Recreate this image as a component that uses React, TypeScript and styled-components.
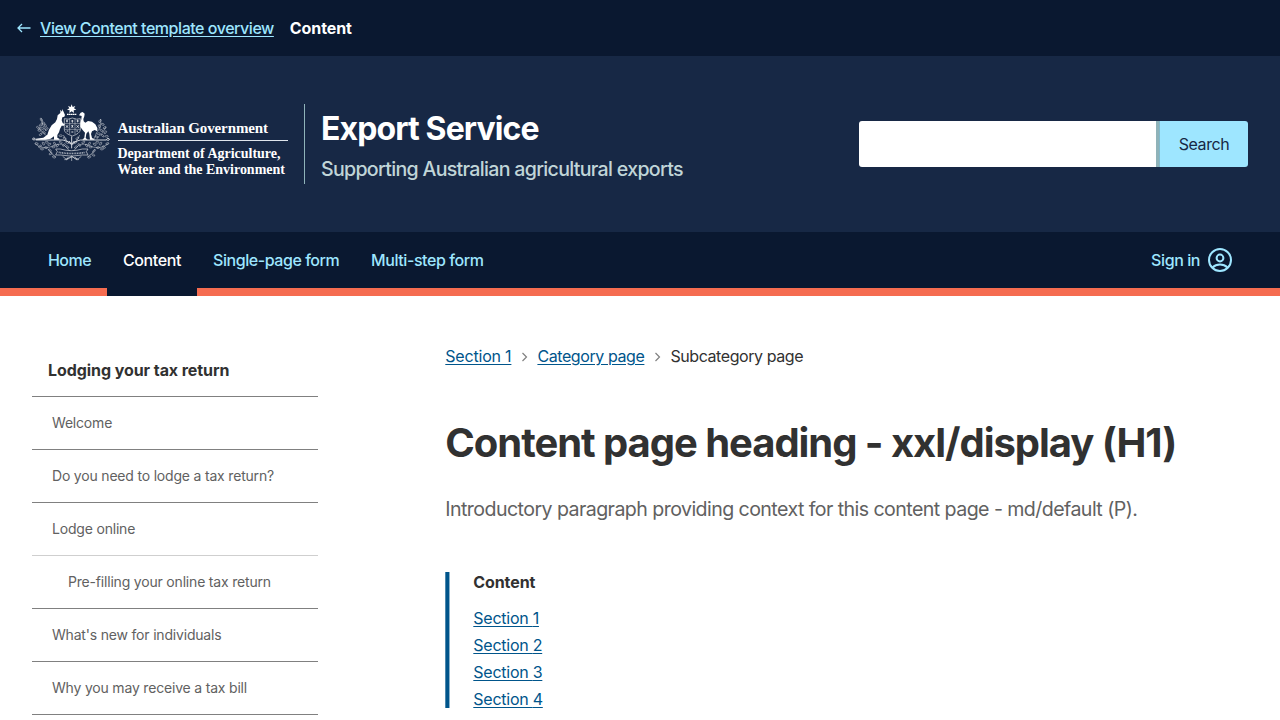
import React from "react";
import styled, { createGlobalStyle } from "styled-components";

const color = {
  shade: "#0a1830",
  body: "#172845",
  action: "#9ee6ff",
  accent: "#f56c50",
  borderDark: "#8fb3b9",
  mutedDark: "#c0d5d8",
  link: "#00558b",
  text: "#313131",
  muted: "#616161",
  border: "#808080",
};

const GlobalStyle = createGlobalStyle`
  *, *::before, *::after { box-sizing: border-box; }
  html, body { margin: 0; padding: 0; height: 720px; overflow: hidden; background: #fff; }
  body {
    font-family: Inter, "Liberation Sans", sans-serif;
    font-size: 16px;
    line-height: 24px;
    color: ${color.text};
  }
  h1, h2, p, ul, ol { margin: 0; padding: 0; }
  ul, ol { list-style: none; }
`;

const Label = styled.span<{ $track?: number }>`
  letter-spacing: ${(p) => p.$track ?? -0.35}px;
  white-space: nowrap;
`;

const TopBar = styled.div`
  display: flex;
  align-items: center;
  height: 56px;
  padding: 0 16px;
  background: ${color.shade};
  color: #fff;
`;

const BackLink = styled.a`
  display: flex;
  align-items: center;
  gap: 8px;
  margin-right: 16px;
  color: ${color.action};
  font-weight: 450;
  span { text-decoration: underline; text-underline-offset: 2px; }
`;

const Strong = styled.strong`
  font-weight: 700;
  letter-spacing: -0.1px;
`;

const Header = styled.header`
  display: flex;
  align-items: center;
  justify-content: space-between;
  height: 176px;
  padding: 0 32px;
  background: ${color.body};
`;

const Brand = styled.div`
  display: flex;
  height: 80px;
`;

const Crest = styled.div`
  display: flex;
  width: 273px;
  border-right: 1px solid ${color.borderDark};
  color: #fff;
`;

const Wordmark = styled.div`
  width: 170px;
  margin-left: 7.5px;
  padding-top: 16px;
  font-family: "Liberation Serif", serif;
  font-weight: 700;
  white-space: nowrap;
`;

const Government = styled.div`
  height: 21px;
  border-bottom: 1px solid #dfe5ec;
  font-size: 15px;
  line-height: 17px;
  letter-spacing: -0.12px;
`;

const Department = styled.div`
  margin-top: 5px;
  font-size: 14px;
  line-height: 16px;
  letter-spacing: -0.02px;
`;

const Titles = styled.div`
  padding: 5px 0 0 16px;
`;

const SiteTitle = styled.div`
  font-size: 32px;
  line-height: 40px;
  font-weight: 700;
  letter-spacing: -0.88px;
  color: #fff;
`;

const SiteSubtitle = styled.div`
  margin-top: 5px;
  font-size: 19.6px;
  line-height: 30px;
  letter-spacing: -0.7px;
  font-weight: 450;
  color: ${color.mutedDark};
`;

const SearchForm = styled.form`
  display: flex;
  width: 389px;
  height: 46px;
`;

const SearchInput = styled.input`
  flex: 1;
  min-width: 0;
  border: 0;
  border-right: 3px solid ${color.borderDark};
  border-radius: 3px 0 0 3px;
  background: #fff;
  outline: none;
`;

const SearchButton = styled.button`
  width: 89px;
  padding: 0;
  border: 0;
  border-left: 1px solid #82b9cb;
  border-radius: 0 3px 3px 0;
  background: ${color.action};
  color: ${color.body};
  font: inherit;
  letter-spacing: -0.4px;
`;

const Nav = styled.nav`
  display: flex;
  justify-content: space-between;
  height: 64px;
  padding: 0 32px;
  background: linear-gradient(${color.shade} 56px, ${color.accent} 56px);
`;

const NavList = styled.ul`
  display: flex;
`;

const NavItem = styled.li<{ $active?: boolean; $width?: number }>`
  display: flex;
  align-items: center;
  gap: 8px;
  height: 64px;
  width: ${(p) => (p.$width ? `${p.$width}px` : "auto")};
  padding: 0 16px 8px;
  background: ${(p) => (p.$active ? color.shade : "transparent")};
  color: ${(p) => (p.$active ? "#fff" : color.action)};
  font-weight: 450;
`;

const Page = styled.div`
  display: flex;
  padding: 48px 32px 0;
`;

const Sidebar = styled.aside`
  width: 286px;
  margin-right: 127.3px;
`;

const SideHeading = styled.h2`
  height: 52px;
  padding: 14px 16px;
  font-size: 16px;
  line-height: 24px;
  font-weight: 700;
  letter-spacing: -0.07px;
`;

const SideItem = styled.li<{ $level?: number; $faint?: boolean }>`
  height: 53px;
  padding: 14px 0 0 ${(p) => (p.$level ? 36 : 20)}px;
  border-top: 1px solid ${(p) => (p.$faint ? "#cfcfcf" : color.border)};
  font-size: 14px;
  color: ${color.muted};
`;

const SideList = styled.ul`
  border-bottom: 1px solid ${color.border};
`;

const Main = styled.main`
  flex: 1;
`;

const Breadcrumbs = styled.ol`
  display: flex;
  align-items: center;
  height: 24px;
  svg { display: block; margin: 0 8px; }
`;

const Link = styled.a<{ $track?: number }>`
  color: ${color.link};
  letter-spacing: ${(p) => p.$track ?? -0.25}px;
  text-decoration: underline;
  text-underline-offset: 2px;
`;

const PageHeading = styled.h1`
  margin-top: 50px;
  font-size: 40px;
  line-height: 50px;
  font-weight: 700;
  letter-spacing: -1.05px;
  white-space: nowrap;
`;

const Intro = styled.p`
  margin-top: 26px;
  font-size: 19.6px;
  line-height: 30px;
  letter-spacing: -0.57px;
  color: ${color.muted};
`;

const Contents = styled.section`
  height: 136px;
  margin-top: 48px;
  padding-left: 28px;
  background: linear-gradient(90deg, #4c88ae 1px, ${color.link} 1px 4px, #8cb3cb 4px 5px, transparent 5px);
`;

const ContentsHeading = styled.h2`
  font-size: 16px;
  line-height: 20px;
  font-weight: 700;
  letter-spacing: -0.1px;
`;

const ContentsList = styled.ul`
  margin-top: 13px;
  li { height: 27px; line-height: 27px; }
`;

const leaves: [number, number, number][] = [
  [64, 74, 60], [70, 84, 20], [62, 90, -30], [76, 92, 70], [66, 100, 30], [80, 102, -40], [58, 106, 10],
  [72, 112, 50], [62, 118, -40], [54, 98, 40],
  [240, 78, -60], [248, 88, 20], [238, 94, 70], [254, 98, -30], [244, 106, 30], [256, 112, -50], [236, 116, 0],
  [248, 122, 40], [260, 124, 0], [230, 126, 30],
  [50, 146, 20], [60, 154, -40], [70, 146, 60], [78, 158, 10], [88, 148, -30], [90, 166, 50], [100, 156, 0],
  [104, 146, 60], [80, 142, 0], [92, 176, -30], [102, 186, 20], [112, 152, -50], [66, 162, 10],
  [262, 146, -20], [252, 156, 40], [242, 146, -60], [234, 158, -10], [224, 148, 30], [222, 168, -50], [212, 156, 0],
  [208, 146, -60], [232, 142, 0], [220, 180, 30], [208, 186, -20], [200, 152, 50], [246, 162, -10],
  [122, 142, 40], [132, 150, -40], [142, 142, 20], [166, 142, -20], [178, 150, 40], [190, 142, -40],
  [122, 122, 0], [134, 130, 40], [172, 130, -40], [142, 156, 30], [168, 156, -30],
];

function CoatOfArms() {
  return (
    <svg width="78" height="60" viewBox="36 27 234 180" fill="none" stroke="currentColor" strokeWidth="2">
      <path
        d="M155 28l3 8 8-3-4 7 7 4-8 2 1 8-7-5-7 5 1-8-8-2 7-4-4-7 8 3z"
        fill="currentColor"
        stroke="none"
      />
      <path d="M141 58h28" strokeWidth="4" strokeDasharray="5 1" />
      <path
        d="M121 44L126 50 127 42 131 51 135 60 133 65 127 67 125 76 128 84 134 88 132 92 125 92 120 102 117 112 112 120 112 128 118 131V134H102V124L92 131 76 134H46L48 131 70 128 82 119 87 104 95 91 106 82 111 72 113 61 121 54z"
        fill="currentColor"
        stroke="none"
      />
      <path
        d="M177 61L182 53 188 51 194 56 193 64 190 72 191 79 196 83 204 78 216 80 226 88 232 99 232 109 224 105 216 109 213 117 216 129 223 132V134H210L208 116 205 109 199 116 197 129 203 134H187L193 128 195 113 186 103 181 95 181 84 184 73 185 63z"
        fill="currentColor"
        stroke="none"
      />
      <g opacity=".85">
        <path d="M133 71q11 4 24-2 13 6 24 2v34q-2 11-24 18-22-7-24-18z" />
        <path d="M133 86h48M149 71v15M165 71v15M134 103h46M149 86v32M165 86v32" strokeWidth="1.5" />
        <path
          d="M138 78h6M141 74v8M154 78h6M157 75v8M170 78h6M173 74v8M138 91l6 7M144 91l-6 7M155 90l4 8M159 90l-4 8M170 91l6 7M176 91l-6 7M140 108h5M154 111h6M169 108h5"
          strokeWidth="3"
        />
      </g>
      <g opacity=".8">
        <path d="M37 132q5-7 9 0-3 7-9 0M47 135h82q14 2 26 13 12-11 26-13h78M259 134q4-8 9-2 0 7-9 2" strokeWidth="3" />
        <path
          d="M64 70q2 24 14 38M56 96q10 20 34 32M242 72q2 26-12 40l-8 20M258 96q-8 20-26 32M44 146q26 22 62 4 22-8 34 8 8 10 15 16 6-6 14-16 12-16 34-8 36 18 62-4M84 162q10 16 24 24M226 162q-10 16-24 24M130 120q8 20 25 30 16-8 24-30"
          strokeWidth="1.5"
        />
        <path d="M155 124v36M147 138l8 10 8-10" strokeWidth="3" />
      </g>
      <g opacity=".65" strokeWidth="1.9">
        {leaves.map(([x, y, a]) => (
          <ellipse key={`${x}-${y}`} cx={x} cy={y} rx="5" ry="2.6" transform={`rotate(${a} ${x} ${y})`} />
        ))}
      </g>
      <g opacity=".85">
        <path d="M107 162h14q34 10 66 0h17l-5 8 5 10h-17q-32 7-66 0h-14l5-10z" fill={color.body} />
        <path d="M116 172q40 7 80 0" strokeWidth="5" strokeDasharray="3 2" opacity=".75" />
        <path d="M155 182l-10 10-12 2M155 182l10 10 12 2M155 182v16M145 186l-6 10M165 186l6 10M128 184l10 8 18-6 18 6 10-8" strokeWidth="1.8" />
      </g>
    </svg>
  );
}

function Arrow() {
  return (
    <svg width="16" height="16" viewBox="0 0 16 16" fill="none" stroke="currentColor" strokeWidth="1.3">
      <path d="M14.500 8H2M6 4L2 8l4 4" />
    </svg>
  );
}

function Chevron() {
  return (
    <svg width="10" height="12" viewBox="0 0 10 12" fill="none" stroke="#808080" strokeWidth="1.2">
      <path d="M3.500 3l4 4-4 4" />
    </svg>
  );
}

function Avatar() {
  return (
    <svg width="24" height="24" viewBox="0 0 24 24" fill="none" stroke="currentColor" strokeWidth="2">
      <circle cx="12" cy="12" r="11" />
      <circle cx="12" cy="10" r="3.4" />
      <path d="M4.500 19.500Q7.500 16.500 12 16.500T19.500 19.500" />
    </svg>
  );
}

const sideItems = [
  { label: "Welcome" },
  { label: "Do you need to lodge a tax return?" },
  { label: "Lodge online" },
  { label: "Pre-filling your online tax return", level: 1, faint: true },
  { label: "What's new for individuals" },
  { label: "Why you may receive a tax bill" },
];

export default function App() {
  return (
    <>
      <GlobalStyle />
      <TopBar>
        <BackLink>
          <Arrow />
          <Label $track={-0.46}>View Content template overview</Label>
        </BackLink>
        <Strong>Content</Strong>
      </TopBar>
      <Header>
        <Brand>
          <Crest>
            <CoatOfArms />
            <Wordmark>
              <Government>Australian Government</Government>
              <Department>
                Department of Agriculture,
                <br />
                Water and the Environment
              </Department>
            </Wordmark>
          </Crest>
          <Titles>
            <SiteTitle>Export Service</SiteTitle>
            <SiteSubtitle>Supporting Australian agricultural exports</SiteSubtitle>
          </Titles>
        </Brand>
        <SearchForm>
          <SearchInput aria-label="Search" />
          <SearchButton type="button">Search</SearchButton>
        </SearchForm>
      </Header>
      <Nav>
        <NavList>
          <NavItem $width={75}><Label $track={-0.55}>Home</Label></NavItem>
          <NavItem $width={90} $active><Label $track={-0.4}>Content</Label></NavItem>
          <NavItem $width={158}><Label $track={-0.44}>Single-page form</Label></NavItem>
          <NavItem><Label $track={-0.41}>Multi-step form</Label></NavItem>
        </NavList>
        <NavList>
          <NavItem>
            <Label $track={-0.42}>Sign in</Label>
            <Avatar />
          </NavItem>
        </NavList>
      </Nav>
      <Page>
        <Sidebar>
          <SideHeading>Lodging your tax return</SideHeading>
          <SideList>
            {sideItems.map((item) => (
              <SideItem key={item.label} $level={item.level} $faint={item.faint}>
                <Label $track={-0.19}>{item.label}</Label>
              </SideItem>
            ))}
          </SideList>
        </Sidebar>
        <Main>
          <Breadcrumbs>
            <Link $track={-0.2}>Section 1</Link>
            <Chevron />
            <Link $track={-0.41}>Category page</Link>
            <Chevron />
            <Label $track={-0.42}>Subcategory page</Label>
          </Breadcrumbs>
          <PageHeading>Content page heading - xxl/display (H1)</PageHeading>
          <Intro>Introductory paragraph providing context for this content page - md/default (P).</Intro>
          <Contents>
            <ContentsHeading>Content</ContentsHeading>
            <ContentsList>
              {[1, 2, 3, 4].map((n) => (
                <li key={n}><Link>Section {n}</Link></li>
              ))}
            </ContentsList>
          </Contents>
        </Main>
      </Page>
    </>
  );
}
